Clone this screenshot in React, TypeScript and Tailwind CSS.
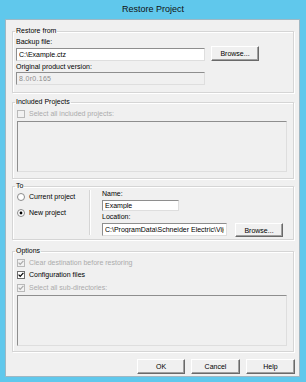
import type { ReactNode } from "react";

const font = "font-['Liberation_Sans',Arial,sans-serif]";

function Btn({ children, className = "" }: { children: ReactNode; className?: string }) {
  return (
    <button
      type="button"
      className={`block w-[48px] shrink-0 border border-t-white border-l-white border-r-[#696969] border-b-[#696969] bg-[#f0f0f0] text-[7px] leading-none text-black shadow-[inset_-1px_-1px_0_#a0a0a0] ${className}`}
    >
      {children}
    </button>
  );
}

function Group({ title, className = "", children }: { title: string; className?: string; children: ReactNode }) {
  return (
    <fieldset
      className={`ml-[6px] mr-[5px] min-w-0 border border-[#d5d5d5] pl-[3px] pr-[7px] shadow-[inset_1px_1px_0_#fff,1px_1px_0_#fff] ${className}`}
    >
      <legend className="-ml-[1px] px-[1px] text-[7px] leading-[8px] text-black">{title}</legend>
      {children}
    </fieldset>
  );
}

function Check({ checked = false, disabled = false }: { checked?: boolean; disabled?: boolean }) {
  return (
    <svg width="8" height="8" viewBox="0 0 8 8" className="block shrink-0">
      <rect x="0.5" y="0.5" width="7" height="7" fill={disabled ? "#f2f2f2" : "#fff"} stroke={disabled ? "#b9b9b9" : "#6d6d6d"} />
      {checked ? (
        <path d="M1.6 3.6 L3.2 5.3 L6.4 1.9" fill="none" stroke={disabled ? "#a9a9a9" : "#000"} strokeWidth="1.2" />
      ) : null}
    </svg>
  );
}

function Radio({ selected = false }: { selected?: boolean }) {
  return (
    <svg width="8" height="8" viewBox="0 0 8 8" className="block shrink-0">
      <circle cx="4" cy="4" r="3.5" fill="#fff" stroke="#8b8b8b" />
      {selected ? <circle cx="4" cy="4" r="1.4" fill="#000" /> : null}
    </svg>
  );
}

const sunken = "border border-t-[#8e8e8e] border-l-[#8e8e8e] border-r-[#dedede] border-b-[#dedede]";
const field = `block bg-white px-[2px] text-[7px] leading-none text-black outline-none ${sunken}`;

export default function App() {
  return (
    <div className={`flex h-[382px] w-[306px] flex-col bg-[#60c8ec] text-[7px] leading-[8px] ${font}`}>
      <div className="flex h-[19px] items-center justify-center text-[9px] leading-none text-[#111]">Restore Project</div>

      <div className="ml-[5px] mr-[6px] flex h-[358px] flex-col border border-[#9fb8c4] bg-[#f0f0f0]">
        <Group title="Restore from" className="mt-[7px] pb-[7px]">
          <div className="mt-[3px] text-black">Backup file:</div>
          <div className="flex items-start">
            <input readOnly value="C:\Example.ctz" className={`mt-[2px] h-[13px] w-[189px] ${field}`} />
            <Btn className="ml-[6px] h-[15px]">Browse...</Btn>
          </div>
          <div className="mt-[2px] text-black">Original product version:</div>
          <input
            readOnly
            value="8.0r0.165"
            className={`mt-[1px] h-[13px] w-[189px] !bg-[#f0f0f0] tracking-[0.3px] !text-[#8d8d8d] ${field}`}
          />
        </Group>

        <Group title="Included Projects" className="mt-[5px] pb-[6px]">
          <div className="ml-[1px] mt-[4px] flex h-[8px] items-center gap-[4px]">
            <Check disabled />
            <span className="text-[#ababab]">Select all included projects:</span>
          </div>
          <div className={`ml-[1px] mt-[3px] h-[51px] w-[270px] bg-[#f0f0f0] ${sunken}`} />
        </Group>

        <Group title="To" className="mt-[3px] pb-[2px]">
          <div className="flex">
            <div className="flex w-[73px] flex-col">
              <label className="ml-[1px] mt-[3px] flex h-[8px] items-center gap-[4px] text-black">
                <Radio />
                Current project
              </label>
              <label className="ml-[1px] mt-[8px] flex h-[8px] items-center gap-[4px] text-black">
                <Radio selected />
                New project
              </label>
            </div>
            <div className="h-[45px] w-[2px] border-l border-[#d5d5d5] bg-white" />
            <div className="ml-[11px] flex flex-col">
              <div className="text-black">Name:</div>
              <input readOnly value="Example" className={`mt-[2px] h-[11px] w-[77px] ${field}`} />
              <div className="mt-[2px] text-black">Location:</div>
              <div className="mt-[2px] flex items-start">
                <input
                  readOnly
                  value="C:\ProgramData\Schneider Electric\Vijeo Designer"
                  className={`h-[13px] w-[125px] ${field}`}
                />
                <Btn className="ml-[8px] h-[14px]">Browse...</Btn>
              </div>
            </div>
          </div>
        </Group>

        <Group title="Options" className="mt-[7px] pb-[5px]">
          <div className="ml-[1px] mt-[4px] flex h-[8px] items-center gap-[4px]">
            <Check checked disabled />
            <span className="text-[#ababab]">Clear destination before restoring</span>
          </div>
          <div className="ml-[1px] mt-[4px] flex h-[8px] items-center gap-[4px]">
            <Check checked />
            <span className="text-black">Configuration files</span>
          </div>
          <div className="ml-[1px] mt-[5px] flex h-[8px] items-center gap-[4px]">
            <Check checked disabled />
            <span className="text-[#ababab]">Select all sub-directories:</span>
          </div>
          <div className={`ml-[1px] mt-[3px] h-[51px] w-[270px] bg-[#f0f0f0] ${sunken}`} />
        </Group>

        <div className="mt-[7px] flex justify-end gap-[6px] pr-[4px]">
          <Btn className="h-[15px]">OK</Btn>
          <Btn className="h-[15px] w-[49px]">Cancel</Btn>
          <Btn className="h-[15px] w-[49px]">Help</Btn>
        </div>
      </div>
    </div>
  );
}
